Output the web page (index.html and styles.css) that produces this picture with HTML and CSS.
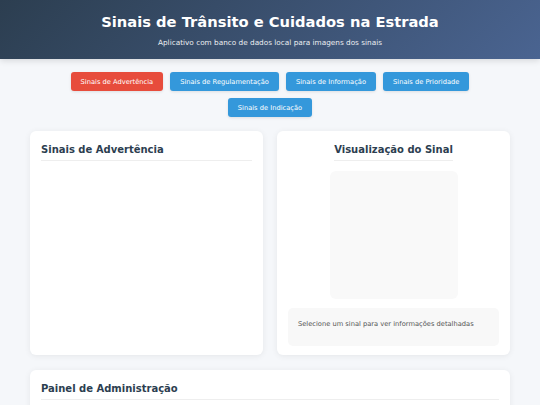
FILE: index.html
```html
<!DOCTYPE html>
<html lang="pt">
<head>
<meta charset="utf-8">
<title>Sinais de Trânsito</title>
<link rel="stylesheet" href="styles.css">
</head>
<body>
<header class="header">
  <h1 class="title">Sinais de Trânsito e Cuidados na Estrada</h1>
  <p class="subtitle">Aplicativo com banco de dados local para imagens dos sinais</p>
</header>
<nav class="nav">
  <button class="btn btn-active">Sinais de Advertência</button>
  <button class="btn">Sinais de Regulamentação</button>
  <button class="btn">Sinais de Informação</button>
  <button class="btn">Sinais de Prioridade</button>
  <button class="btn">Sinais de Indicação</button>
</nav>
<main class="container">
  <div class="grid">
    <section class="card">
      <h2 class="card-title">Sinais de Advertência</h2>
      <div class="sign-list"></div>
    </section>
    <section class="card card-center">
      <h2 class="card-title card-title-inline">Visualização do Sinal</h2>
      <div class="preview"></div>
      <div class="info">Selecione um sinal para ver informações detalhadas</div>
    </section>
  </div>
  <section class="card admin">
    <h2 class="card-title">Painel de Administração</h2>
  </section>
</main>
</body>
</html>
```
FILE: styles.css
```css
* { box-sizing: border-box; }
html, body { margin: 0; padding: 0; }
body {
  font-family: "DejaVu Sans", Verdana, sans-serif;
  background: #f5f7fa;
  color: #333;
}
.header {
  background: linear-gradient(135deg, #2c3e50 0%, #4a6491 100%);
  color: #fff;
  text-align: center;
  height: 59px;
  padding-top: 13px;
  box-shadow: 0 2px 6px rgba(0,0,0,0.12);
}
.title {
  margin: 0;
  font-size: 14.7px;
  font-weight: bold;
  line-height: 18px;
}
.subtitle {
  margin: 7px 0 0;
  font-size: 7.3px;
  line-height: 10px;
  opacity: 0.9;
}
.nav {
  display: flex;
  flex-wrap: wrap;
  justify-content: center;
  gap: 7px;
  padding: 0 60px;
  margin-top: 13px;
}
.btn {
  font-family: inherit;
  font-size: 6.7px;
  height: 19px;
  padding: 0 10px;
  border: none;
  border-radius: 3px;
  background: #3498db;
  color: #fff;
  box-shadow: 0 1px 3px rgba(0,0,0,0.1);
}
.btn-active { background: #e74c3c; }
.container {
  width: 480px;
  margin: 14px auto 0;
}
.grid {
  display: grid;
  grid-template-columns: 1fr 1fr;
  gap: 14px;
}
.card {
  background: #fff;
  border-radius: 6px;
  box-shadow: 0 1px 6px rgba(0,0,0,0.07);
  padding: 12px 11px 9px;
}
.card-center {
  display: flex;
  flex-direction: column;
  align-items: center;
}
.card-title {
  margin: 0;
  font-size: 10px;
  line-height: 13px;
  color: #2c3e50;
  font-weight: bold;
  padding-bottom: 4px;
  border-bottom: 1px solid #eee;
}
.card-title-inline { display: inline-block; }
.sign-list { min-height: 100px; }
.preview {
  width: 128px;
  height: 128px;
  background: #f9f9f9;
  border-radius: 6px;
  margin-top: 10px;
}
.info {
  align-self: stretch;
  background: #f8f8f8;
  border-radius: 5px;
  margin-top: 9px;
  padding: 11px 10px;
  height: 38px;
  font-size: 6.7px;
  line-height: 10px;
  color: #555;
}
.admin {
  margin-top: 15px;
  height: 60px;
  padding-top: 12px;
}
```
